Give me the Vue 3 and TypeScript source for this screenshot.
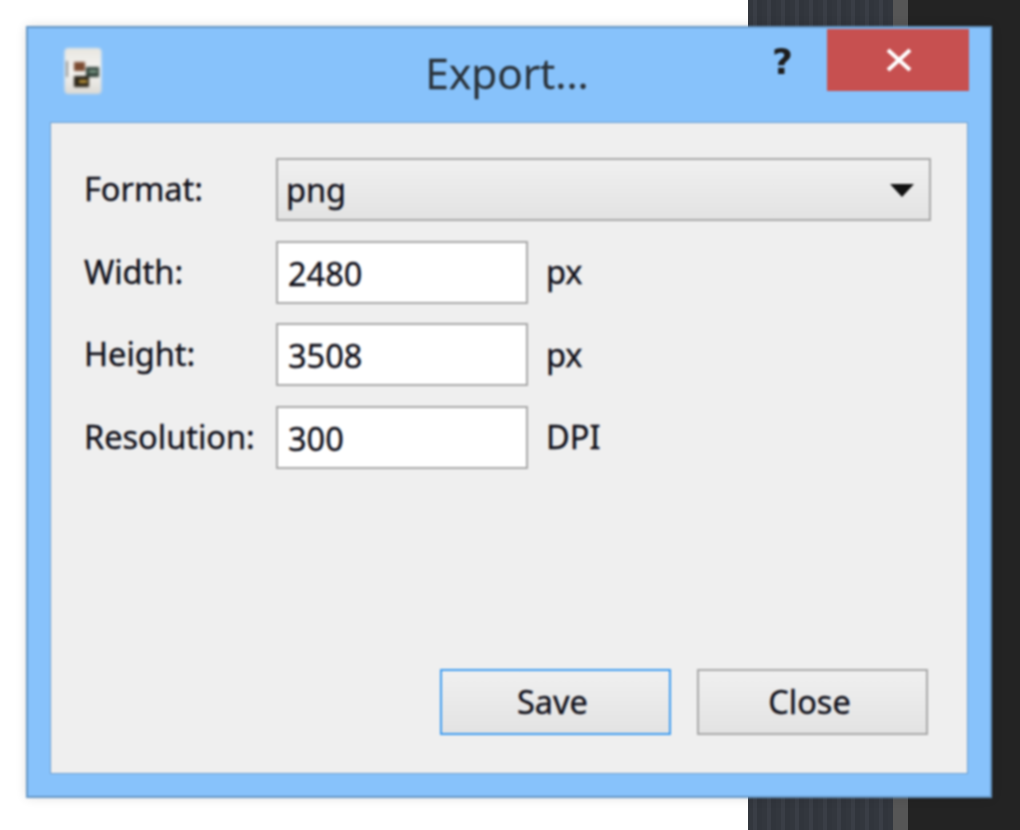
<script setup lang="ts">
interface Field { label: string; value: string; unit: string }
const fields: Field[] = [
  { label: 'Width:', value: '2480', unit: 'px' },
  { label: 'Height:', value: '3508', unit: 'px' },
  { label: 'Resolution:', value: '300', unit: 'DPI' },
]
</script>

<template>
  <div class="desktop">
    <div class="page"></div>
    <div class="panel"></div>
    <div class="splitter"></div>
    <div class="side"></div>

    <section class="window">
      <header class="titlebar">
        <svg class="app-icon" viewBox="0 0 38 48" width="38" height="48">
          <defs>
            <linearGradient id="doc" x1="0" y1="0" x2="0" y2="1">
              <stop offset="0" stop-color="#e8e6e0" />
              <stop offset="0.5" stop-color="#f6f5f2" />
              <stop offset="1" stop-color="#dcdad4" />
            </linearGradient>
          </defs>
          <rect x="0.5" y="1" width="37" height="46" rx="4" fill="url(#doc)" />
          <rect x="2" y="14" width="2" height="16" fill="#8a8a88" />
          <rect x="10" y="15" width="11" height="9" fill="#7a4a30" />
          <rect x="22" y="20" width="13" height="10" fill="#2f4038" />
          <rect x="25" y="23" width="8" height="3" fill="#7c9a88" />
          <rect x="10" y="29" width="15" height="11" fill="#2a2418" />
          <rect x="15" y="33" width="8" height="3" fill="#c29a3a" />
        </svg>
        <h1 class="title">Export...</h1>
        <span class="help">?</span>
        <button class="close-x" type="button" aria-label="Close">
          <svg viewBox="0 0 26 24" width="26" height="24">
            <path d="M2 2 L24 22 M24 2 L2 22" stroke="#fff" stroke-width="4" fill="none" />
          </svg>
        </button>
      </header>

      <div class="client">
        <div class="form">
          <label class="lbl">Format:</label>
          <div class="combo">
            <span>png</span>
            <svg viewBox="0 0 24 14" width="24" height="14">
              <path d="M0 1 H24 L12 14 Z" fill="#111" />
            </svg>
          </div>

          <template v-for="f in fields" :key="f.label">
            <label class="lbl">{{ f.label }}</label>
            <div class="value-row">
              <input class="num" type="text" :value="f.value" readonly />
              <span class="unit">{{ f.unit }}</span>
            </div>
          </template>
        </div>

        <div class="actions">
          <button class="btn focused" type="button">Save</button>
          <button class="btn" type="button">Close</button>
        </div>
      </div>
    </section>
  </div>
</template>

<style>
html, body { margin: 0; padding: 0; background: #fff; }
</style>

<style scoped>
.desktop {
  position: relative;
  width: 1020px;
  height: 830px;
  display: flex;
  overflow: hidden;
  font-family: "Noto Sans", "Open Sans", sans-serif;
}
.page { width: 748px; background: #fff; }
.panel {
  width: 145px;
  background: repeating-linear-gradient(90deg, #33373e 0 5px, #3a3e46 5px 9px, #31353c 9px 14px);
}
.splitter { width: 15px; background: #565656; }
.side { flex: 1; background: #232323; }

.window {
  position: absolute;
  left: 26px;
  top: 26px;
  width: 966px;
  height: 772px;
  box-sizing: border-box;
  display: flex;
  flex-direction: column;
  background: #87c2fb;
  border: 2px solid #6496c6;
  padding: 0 22px 22px;
  box-shadow: 0 0 10px rgba(0, 0, 0, 0.12);
  filter: blur(0.9px);
}
.titlebar {
  position: relative;
  height: 94px;
  flex: none;
}
.app-icon {
  position: absolute;
  left: 14px;
  top: 19px;
  filter: blur(0.8px);
}
.title {
  position: absolute;
  left: 0;
  right: 0;
  top: 15px;
  margin: 0;
  padding-right: 4px;
  text-align: center;
  font: 400 42.5px/60px "Open Sans", "Noto Sans", sans-serif;
  color: #2a323a;
  -webkit-text-stroke: 0.3px #2a323a;
}
.help {
  position: absolute;
  left: 722px;
  top: 11px;
  font: 700 36px/46px "DejaVu Sans", sans-serif;
  color: #1c1c1c;
}
.close-x {
  position: absolute;
  left: 777px;
  top: 1px;
  width: 142px;
  height: 62px;
  padding: 0 0 0 2px;
  border: 0;
  background: #c75050;
  display: flex;
  align-items: center;
  justify-content: center;
}

.client {
  flex: 1;
  display: flex;
  flex-direction: column;
  justify-content: space-between;
  box-sizing: border-box;
  background: #efefef;
  border: 1px solid #6e9fce;
  padding: 35px 39px 38px 33px;
  color: #10101a;
  font-size: 32.5px;
  -webkit-text-stroke: 0.35px #10101a;
}
.form {
  display: grid;
  grid-template-columns: 192px 1fr;
  grid-auto-rows: 63px;
  row-gap: 19.5px;
  align-items: center;
  margin-right: -3px;
}
.lbl {
  line-height: 40px;
  margin-top: -1px;
}
.combo {
  height: 63px;
  box-sizing: border-box;
  display: flex;
  align-items: center;
  justify-content: space-between;
  padding: 0 15px 0 8px;
  border: 2px solid #a8a8a8;
  background: linear-gradient(#f0f0f0, #e3e3e3);
}
.combo span { margin-top: -1px; }
.value-row {
  display: flex;
  align-items: center;
  gap: 18px;
}
.num {
  width: 252px;
  height: 63px;
  box-sizing: border-box;
  border: 2px solid #a8a8a8;
  background: #fff;
  padding: 2px 10px 0;
  margin: 0;
  outline: none;
  font: inherit;
  color: inherit;
}
.unit { margin-top: -1px; }
.actions {
  display: flex;
  justify-content: flex-end;
  gap: 26px;
}
.btn {
  width: 231px;
  height: 66px;
  box-sizing: border-box;
  padding: 0 6px 1px 0;
  border: 2px solid #a8a8a8;
  background: linear-gradient(#f0f0f0, #e3e3e3);
  font: inherit;
  color: inherit;
}
.btn.focused { border-color: #3c9bf0; }
</style>
